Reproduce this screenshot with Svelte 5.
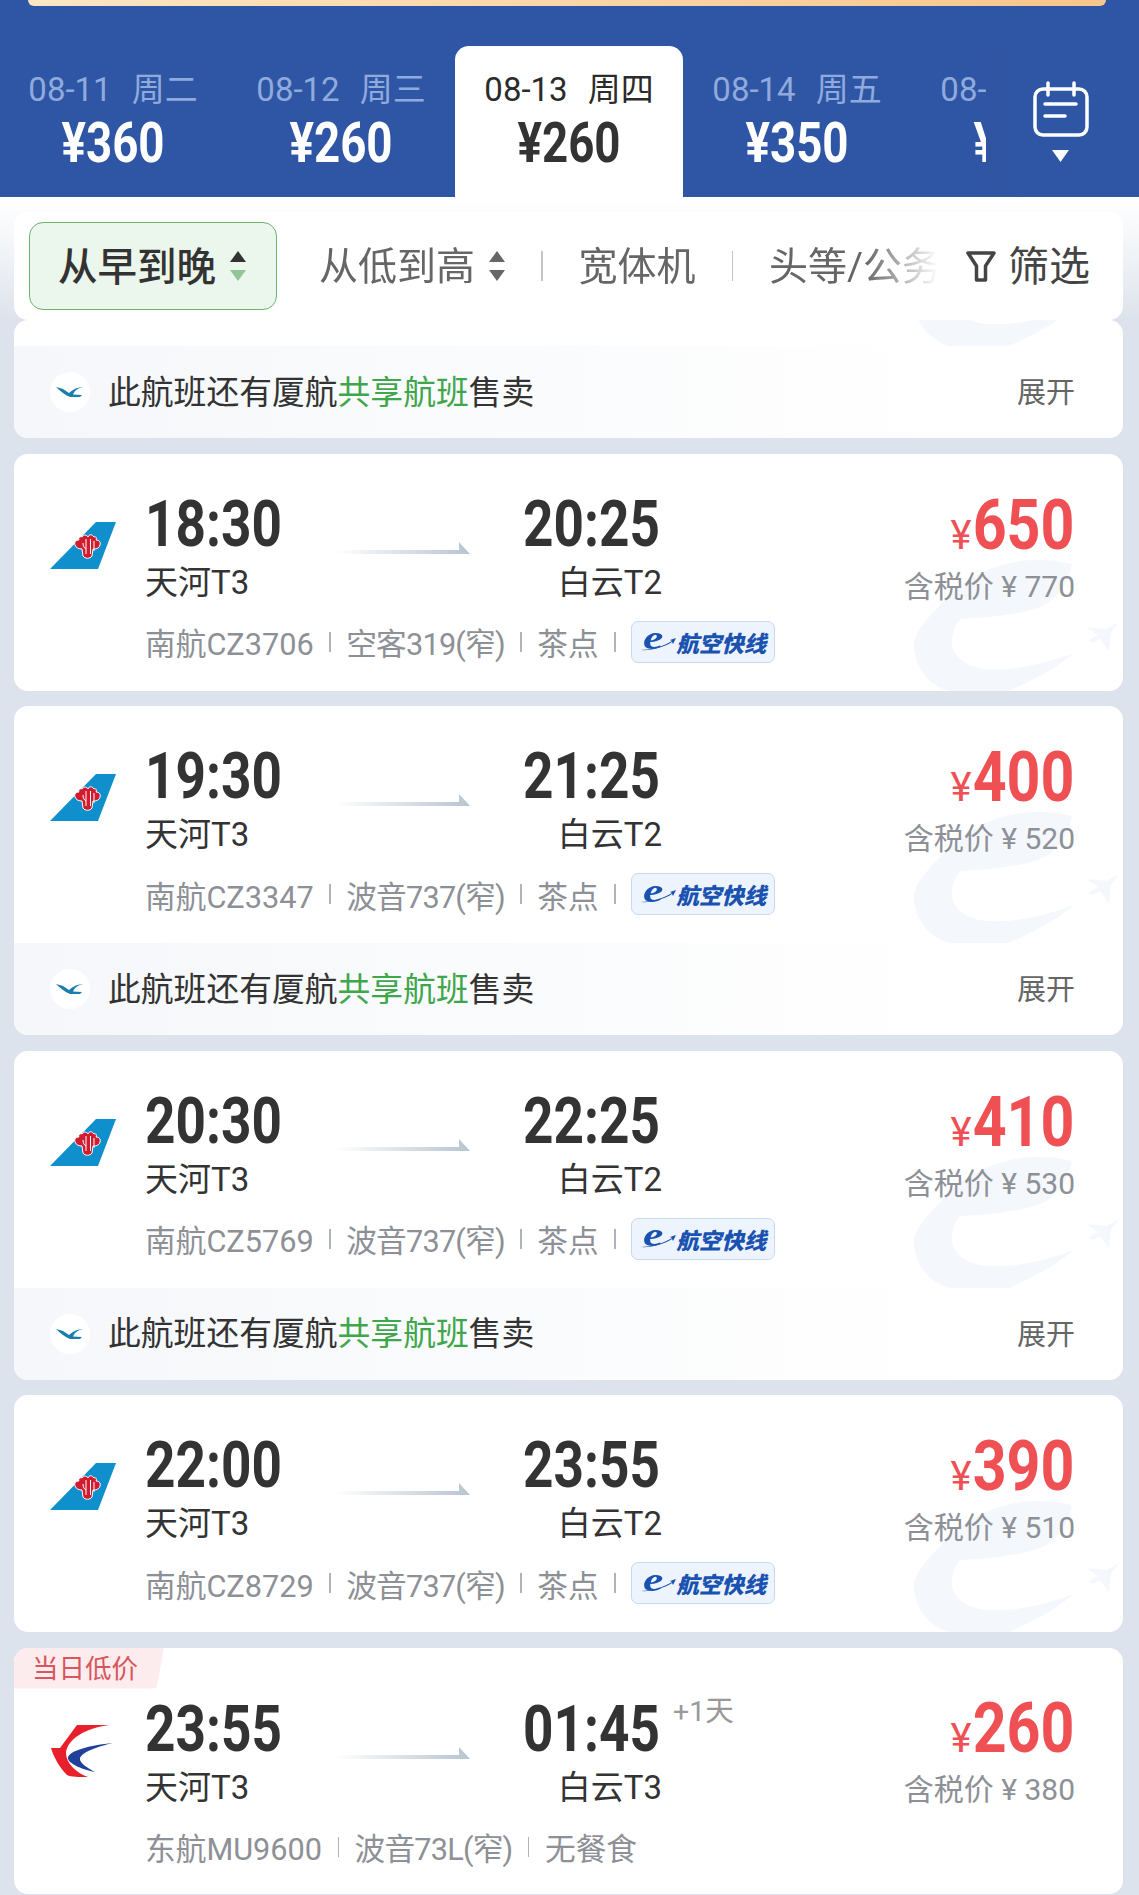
<script>
	const dates = [
		{ date: '08-11', week: '周二', price: 360 },
		{ date: '08-12', week: '周三', price: 260 },
		{ date: '08-13', week: '周四', price: 260, active: true },
		{ date: '08-14', week: '周五', price: 350 },
		{ date: '08-15', week: '周六', price: 300 }
	];

	const flights = [
		{ dep: '18:30', arr: '20:25', from: '天河T3', to: '白云T2', no: '南航CZ3706', plane: '空客319(窄)', meal: '茶点', price: 650, tax: 770, logo: 'cz', tag: true },
		{ dep: '19:30', arr: '21:25', from: '天河T3', to: '白云T2', no: '南航CZ3347', plane: '波音737(窄)', meal: '茶点', price: 400, tax: 520, logo: 'cz', tag: true, share: true },
		{ dep: '20:30', arr: '22:25', from: '天河T3', to: '白云T2', no: '南航CZ5769', plane: '波音737(窄)', meal: '茶点', price: 410, tax: 530, logo: 'cz', tag: true, share: true },
		{ dep: '22:00', arr: '23:55', from: '天河T3', to: '白云T2', no: '南航CZ8729', plane: '波音737(窄)', meal: '茶点', price: 390, tax: 510, logo: 'cz', tag: true },
		{ dep: '23:55', arr: '01:45', from: '天河T3', to: '白云T3', no: '东航MU9600', plane: '波音73L(窄)', meal: '无餐食', price: 260, tax: 380, logo: 'mu', low: true, nextDay: true }
	];
</script>

{#snippet watermark()}
	<svg class="watermark" viewBox="0 0 205 136" aria-hidden="true">
		<path d="M158 9C110-4 60 14 35 41 10 66-2 80 0 94c2 18 14 36 35 42h60c22-10 45-21 65-38-30 11-62 18-88 16-20-2-36-14-34-30 1-10 4-16 9-20 38-2 73-6 88-17 13-10 20-22 23-38z" />
		<path d="M205 67l-13 7-20-2 12 8-10 6 5 2 7-4 9 13 2-19z" />
	</svg>
{/snippet}

{#snippet shareRow()}
	<div class="share">
		<span class="share-icon">
			<svg viewBox="0 0 28 12" width="28" height="12" aria-hidden="true">
				<path d="M0 1l7 2 6 4c4-4 9-6 14.500-6-5.500 1-8.500 3-10.500 7.500l9 .5-2 2H14C9 9 4 5 0 1z" fill="#1a7eab" />
			</svg>
		</span>
		<span class="share-text">此航班还有厦航<em>共享航班</em>售卖</span>
		<span class="share-more">展开</span>
	</div>
{/snippet}

{#snippet sortArrows(on)}
	<svg class="sort" viewBox="0 0 16 32" width="16" height="32" aria-hidden="true">
		<polygon points="8,1 16,12 0,12" fill={on ? '#333' : '#666'} />
		<polygon points="0,20 16,20 8,31" fill={on ? '#93c599' : '#666'} />
	</svg>
{/snippet}

<div class="page">
	<header class="top">
		<div class="promo"></div>
		<div class="date-row">
			<div class="dates">
				{#each dates as d}
					<div class="date" class:active={d.active}>
						<div class="day">{d.date}<span class="week">{d.week}</span></div>
						<div class="low">¥{d.price}</div>
					</div>
				{/each}
			</div>
			<div class="calendar">
				<svg viewBox="0 0 60 84" width="60" height="84" aria-hidden="true">
					<rect x="4" y="9" width="52" height="46" rx="8" fill="none" stroke="#fff" stroke-width="3.5" />
					<path d="M17 3v12M43 3v12M14 24h31M14 36h20" fill="none" stroke="#fff" stroke-width="3.5" stroke-linecap="round" />
					<polygon points="21,70 38,70 29.500,82" fill="#fff" />
				</svg>
			</div>
		</div>
	</header>

	<div class="filter-wrap">
		<div class="filter">
			<div class="chip"><span class="lift">从早到晚</span>{@render sortArrows(true)}</div>
			<div class="scroller">
				<span class="opt"><span class="lift">从低到高</span>{@render sortArrows(false)}</span>
				<i class="bar"></i>
				<span class="opt"><span class="lift">宽体机</span></span>
				<i class="bar"></i>
				<span class="opt"><span class="lift">头等/公务舱</span></span>
			</div>
			<div class="screen">
				<svg viewBox="0 0 30 32" width="30" height="32" aria-hidden="true">
					<path d="M2 3h26L19.500 16v14h-9V16z" fill="none" stroke="#444" stroke-width="3.500" stroke-linejoin="round" />
				</svg>
				<span class="lift">筛选</span>
			</div>
		</div>
	</div>

	<div class="list">
		<section class="card">
			<div class="stub">{@render watermark()}</div>
			{@render shareRow()}
		</section>

		{#each flights as f}
			<section class="card">
				<div class="main" class:has-low={f.low}>
					{#if f.tag}{@render watermark()}{/if}
					{#if f.low}<span class="low-tag">当日低价</span>{/if}

					<div class="logo">
						{#if f.logo === 'cz'}
							<svg viewBox="0 0 66 47" width="66" height="47" aria-hidden="true">
								<polygon points="0,47 46,0 66,0 48,47" fill="#0f8fcb" />
								<g transform="translate(3 0)">
									<path d="M29 15c2-3 5-2 6 0 1-3 4-3 6 0 2-1 3 1 2 3 3 0 5 2 4 5-1 4-5 4-7 4l-1 7c-2 3-7 3-9 0l-1-7c-3 0-6-1-7-4-1-3 1-5 4-5-1-2 1-4 3-3z" fill="#d01c2e" stroke="#fff" stroke-width="1" />
									<path d="M33 17v15M37.500 17v15M41 19v10M30 21c0 3 1 5 3 6" fill="none" stroke="#fff" stroke-width="1" />
								</g>
							</svg>
						{:else}
							<svg viewBox="0 0 66 52" width="66" height="52" aria-hidden="true">
								<path d="M59 0H27L10 23H1c3 10 9 20 16 27 4 2 12 2 21 2-12-4-22-14-22-24C17 14 36 3 59 0z" fill="#e8202c" />
								<path d="M63 18C40 20 18 26 18 33c0 5 12 11 27 14-9-5-15-9-15-13 0-6 16-12 33-16z" fill="#21409a" />
							</svg>
						{/if}
					</div>

					<div class="info">
						<div class="times">
							<div class="leg">
								<div class="time"><span class="num from">{f.dep}</span></div>
								<div class="terminal">{f.from}</div>
							</div>
							<svg class="arrow" viewBox="0 0 135 12" width="135" height="12" aria-hidden="true">
								<defs>
									<linearGradient id="arrow-fade" x1="0" x2="1">
										<stop offset="0" stop-color="#b8c4d0" stop-opacity="0" />
										<stop offset="1" stop-color="#b8c4d0" />
									</linearGradient>
								</defs>
								<polygon points="0,8 124,8 124,0 135,12 0,12" fill="url(#arrow-fade)" />
							</svg>
							<div class="leg to">
								<div class="time"><span class="num">{f.arr}</span></div>
								<div class="terminal">{f.to}</div>
								{#if f.nextDay}<span class="next-day">+1天</span>{/if}
							</div>
						</div>
						<div class="meta">
							<span>{f.no}</span><i class="sep"></i>
							<span class="plane">{f.plane}</span><i class="sep"></i>
							<span>{f.meal}</span>
							{#if f.tag}
								<i class="sep"></i>
								<span class="tag">
									<svg class="tag-swoosh" viewBox="0 0 36 14" width="36" height="14" aria-hidden="true">
										<path d="M0 13C12 13 24 9 32 4l-2-1 6-2-3 6-1-2C24 10 12 14 0 13z" fill="#1a52b0" />
									</svg>
									<b class="tag-e">e</b>
									<b class="tag-text">航空快线</b>
								</span>
							{/if}
						</div>
					</div>

					<div class="fare">
						<div class="price"><small>¥</small><span class="num amount">{f.price}</span></div>
						<div class="tax">含税价 ¥ {f.tax}</div>
					</div>
				</div>
				{#if f.share}{@render shareRow()}{/if}
			</section>
		{/each}
	</div>
</div>

<style>
	:global(body) { margin: 0; background: #dde3ec; }

	.page {
		width: 1139px;
		height: 1895px;
		overflow: hidden;
		font-family: Roboto, "Noto Sans CJK SC", sans-serif;
		color: #333;
	}
	.lift { position: relative; top: -3px; }

	.top { height: 197px; background: #2f56a4; }
	.promo {
		height: 6px;
		margin: 0 33px 0 28px;
		border-radius: 0 0 12px 12px;
		background: linear-gradient(90deg, #fde6c4, #f6c68c);
	}

	.date-row { display: flex; height: 151px; margin-top: 40px; }
	.dates { display: flex; width: 987px; overflow: hidden; margin-left: -1px; }
	.date {
		flex: 0 0 228px;
		text-align: center;
		border-radius: 14px 14px 0 0;
		color: #fff;
	}
	.date.active { background: #fff; color: #333; }
	.day { margin-top: 26px; font-size: 33px; line-height: 36px; color: #8faadc; white-space: nowrap; }
	.date.active .day { color: #2b2b2b; }
	.week { margin-left: 20px; }
	.low { font-size: 55px; line-height: 60px; margin-top: 5px; font-weight: 700; transform: scaleX(.83); }

	.calendar {
		flex: 1;
		display: flex;
		justify-content: center;
		box-sizing: border-box;
		background: linear-gradient(90deg, #2e54a2, #2f56a4 30%);
	}
	.calendar svg { margin: 34px 0 0 -4px; }

	.filter-wrap {
		height: 123px;
		padding: 15px 16px 0 14px;
		box-sizing: border-box;
		background: linear-gradient(#fff, #f6f8fa 30%, #dde3ec);
	}
	.filter {
		position: relative;
		height: 108px;
		display: flex;
		align-items: center;
		padding-left: 15px;
		background: #fff;
		border-radius: 14px;
	}
	.chip {
		flex: 0 0 248px;
		height: 88px;
		display: flex;
		align-items: center;
		box-sizing: border-box;
		padding-left: 28px;
		font-size: 39.500px;
		font-weight: 500;
		color: #333;
		background: #ebf6ec;
		border: 1.5px solid #6db36f;
		border-radius: 14px;
	}
	.sort { margin-left: 14px; }
	.scroller {
		width: 668px;
		display: flex;
		align-items: center;
		padding-left: 42px;
		box-sizing: border-box;
		overflow: hidden;
		white-space: nowrap;
		mask-image: linear-gradient(90deg, #000 88%, transparent 99%);
	}
	.opt {
		flex: none;
		display: flex;
		align-items: center;
		font-size: 39px;
		color: #666;
	}
	.bar {
		flex: none;
		width: 1.5px;
		height: 30px;
		margin: 0 36px;
		background: #c4c4c4;
	}
	.screen {
		display: flex;
		align-items: center;
		gap: 12px;
		margin-left: 21px;
		font-size: 41px;
		color: #444;
		white-space: nowrap;
	}

	.list { display: flex; flex-direction: column; gap: 15.5px; padding: 0 16px 0 14px; }
	.card {
		position: relative;
		background: #fff;
		border-radius: 14px;
		overflow: hidden;
	}
	.stub { position: relative; height: 26px; overflow: hidden; }
	.watermark {
		position: absolute;
		right: 4px;
		bottom: 0;
		width: 205px;
		height: 136px;
		fill: #f4f7fc;
	}

	.share {
		position: relative;
		height: 92px;
		display: flex;
		align-items: center;
		padding: 0 48px 0 36px;
		background: linear-gradient(90deg, #f5f7fa, #fff 85%);
	}
	.share-icon {
		flex: none;
		width: 40px;
		height: 40px;
		display: flex;
		align-items: center;
		justify-content: center;
		border-radius: 50%;
		background: #fff;
	}
	.share-text { position: relative; top: -3px; margin-left: 18px; font-size: 32.800px; color: #333; }
	.share-text em { font-style: normal; color: #3fa64c; }
	.share-more { position: relative; top: -2px; margin-left: auto; font-size: 29px; color: #666; }

	.main {
		position: relative;
		height: 237px;
		display: flex;
		box-sizing: border-box;
		padding: 36px 48px 0 36px;
	}
	.main.has-low { padding-top: 44px; height: 246px; }

	.low-tag {
		position: absolute;
		left: 0;
		top: 0;
		height: 41px;
		padding: 0 26px 0 18px;
		font-size: 26.500px;
		line-height: 41px;
		color: #d9565c;
		background: #fdeced;
		border-radius: 14px 0 14px 0;
		clip-path: polygon(0 0, 100% 0, 95% 100%, 0 100%);
	}

	.logo { position: relative; flex: 0 0 95px; padding-top: 32px; }
	.has-low .logo { padding-top: 33px; }

	.info { position: relative; flex: 1; min-width: 0; }
	.has-low .info { padding-top: 3px; }
	.times { display: flex; align-items: flex-start; }
	.leg { width: 165px; flex: none; }
	.leg.to { position: relative; width: 162px; text-align: right; }
	.time { font-size: 64px; line-height: 70px; font-weight: 700; color: #333; }
	/* no DIN-style condensed face is installed, so Roboto gets squeezed */
	.num { display: inline-block; transform: scaleX(.83); transform-origin: right center; }
	.num.from { transform-origin: left center; }
	.leg.to .time { margin-right: 2px; }
	.terminal { font-size: 33px; line-height: 40px; margin-top: 3px; color: #333; white-space: nowrap; }
	.leg.to .terminal { margin-right: -5px; }
	.arrow { flex: none; margin: 52px 25px 0 25px; }
	.next-day {
		position: absolute;
		left: 178px;
		top: -7px;
		font-size: 28.500px;
		color: #999;
		white-space: nowrap;
	}

	.meta {
		display: flex;
		align-items: center;
		height: 44px;
		margin-top: 17px;
		font-size: 30.700px;
		color: #8d9096;
		white-space: nowrap;
	}
	.plane { letter-spacing: -0.8px; }
	.sep { flex: none; width: 1.5px; height: 20px; margin: 0 15.500px; background: #b0b3b8; }
	.tag {
		position: relative;
		flex: none;
		width: 144px;
		height: 42px;
		display: flex;
		align-items: center;
		box-sizing: border-box;
		padding-left: 11px;
		background: #eef4fe;
		border: 1.5px solid #c9d9ee;
		border-radius: 7px;
		color: #1a52b0;
		overflow: hidden;
	}
	.tag-swoosh { position: absolute; left: 8px; top: 15px; }
	.tag-e {
		display: inline-block;
		width: 24px;
		font: italic 700 34px/30px "Liberation Serif", serif;
		transform: scaleX(1.35);
		transform-origin: left center;
		margin-top: -7px;
	}
	.tag-text { margin-left: 9px; font-size: 22.500px; font-style: italic; font-weight: 900; }

	.fare { position: relative; flex: none; margin-top: -2px; text-align: right; white-space: nowrap; }
	.has-low .fare { margin-top: -1px; }
	.price { font-size: 70px; line-height: 74px; font-weight: 700; color: #ef5054; }
	.price small { font-size: 40px; font-weight: 400; }
	.amount { transform: scaleX(.845); margin-left: -18px; margin-right: 1px; }
	.tax { margin-top: -6px; font-size: 30px; line-height: 40px; color: #8d9096; }
</style>
